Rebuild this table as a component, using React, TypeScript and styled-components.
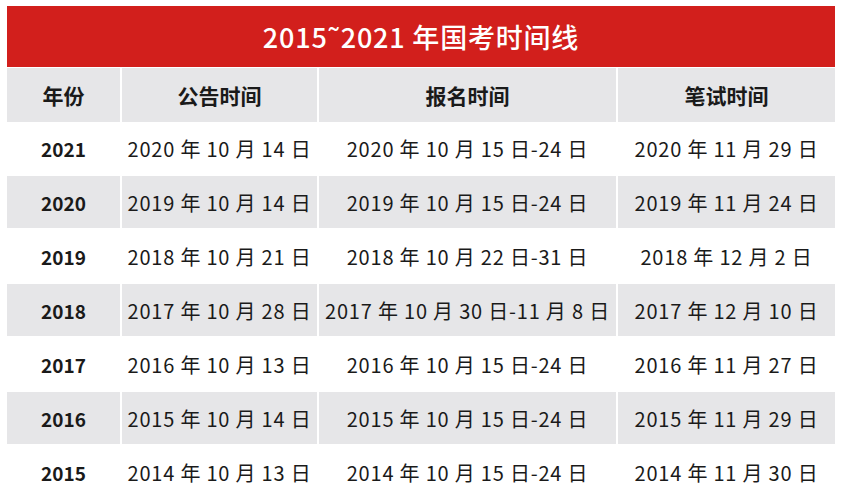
import React from "react";
import styled, { createGlobalStyle } from "styled-components";

const GlobalStyle = createGlobalStyle`
  html, body {
    margin: 0;
    padding: 0;
    background: #fff;
  }
  body {
    font-family: "Noto Sans CJK SC", "Noto Sans", sans-serif;
    color: #1a1a1a;
  }
`;

const Page = styled.div`
  box-sizing: border-box;
  width: 844px;
  height: 501px;
  padding: 6px 9px 0 7px;
  overflow: hidden;
`;

const Title = styled.div`
  display: flex;
  align-items: center;
  justify-content: center;
  height: 61px;
  margin-bottom: 1px;
  background-color: #d21f1c;
  color: #fff;
  font-size: 27px;
  font-weight: 500;
  letter-spacing: 0.8px;
`;

const Table = styled.div`
  display: grid;
  grid-template-columns: 113px 195px 297px 217px;
  grid-auto-rows: 52px;
  column-gap: 2px;
  row-gap: 2px;
`;

const Cell = styled.div<{ $shade?: boolean; $bold?: boolean; $head?: boolean }>`
  display: flex;
  align-items: center;
  justify-content: center;
  white-space: nowrap;
  background-color: ${(p) => (p.$shade ? "#e6e6e8" : "#fff")};
  font-size: ${(p) => (p.$head ? "21px" : p.$bold ? "19px" : "20px")};
  font-weight: ${(p) => (p.$bold ? 700 : 400)};
  letter-spacing: ${(p) => (p.$bold ? "0" : "0.8px")};
  height: ${(p) => (p.$head ? "54px" : "52px")};
  color: #1a1a1a;
`;

const header = ["年份", "公告时间", "报名时间", "笔试时间"];

const rows: string[][] = [
  ["2021", "2020 年 10 月 14 日", "2020 年 10 月 15 日-24 日", "2020 年 11 月 29 日"],
  ["2020", "2019 年 10 月 14 日", "2019 年 10 月 15 日-24 日", "2019 年 11 月 24 日"],
  ["2019", "2018 年 10 月 21 日", "2018 年 10 月 22 日-31 日", "2018 年 12 月 2 日"],
  ["2018", "2017 年 10 月 28 日", "2017 年 10 月 30 日-11 月 8 日", "2017 年 12 月 10 日"],
  ["2017", "2016 年 10 月 13 日", "2016 年 10 月 15 日-24 日", "2016 年 11 月 27 日"],
  ["2016", "2015 年 10 月 14 日", "2015 年 10 月 15 日-24 日", "2015 年 11 月 29 日"],
  ["2015", "2014 年 10 月 13 日", "2014 年 10 月 15 日-24 日", "2014 年 11 月 30 日"],
];

const App = () => {
  return (
    <>
      <GlobalStyle />
      <Page>
        <Title>2015˜2021 年国考时间线</Title>
        <Table>
          {header.map((h) => (
            <Cell key={h} $shade $bold $head>
              {h}
            </Cell>
          ))}
          {rows.map((row, i) =>
            row.map((text, j) => (
              <Cell key={`${i}-${j}`} $shade={i % 2 === 1} $bold={j === 0}>
                {text}
              </Cell>
            ))
          )}
        </Table>
      </Page>
    </>
  );
};

export default App;
